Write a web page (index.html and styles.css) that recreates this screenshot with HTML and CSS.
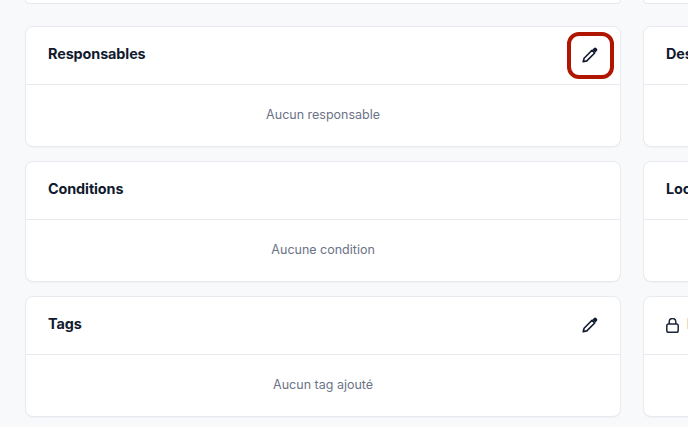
FILE: index.html
```html
<!DOCTYPE html>
<html lang="fr">
<head>
<meta charset="utf-8">
<title>Responsables</title>
<link rel="stylesheet" href="styles.css">
</head>
<body>
<main class="page">
  <div class="stub-row"><div class="stub"></div><div class="stub"></div></div>
  <div class="grid">
    <section class="card">
      <header class="card-head"><h2>Responsables</h2>
        <span class="edit">
          <svg class="pencil" viewBox="0 0 16 16"><path class="pen-line" d="M1.2 14.8l.9-3.6L10 3.3l2.7 2.7-7.9 7.9z"/><path class="pen-fill" d="M10.4 2.7l1.6-1.6a1.6 1.6 0 0 1 2.2 0l.7.7a1.6 1.6 0 0 1 0 2.2l-1.6 1.6z"/></svg>
          <span class="highlight"></span>
        </span>
      </header>
      <p class="card-body">Aucun responsable</p>
    </section>
    <section class="card">
      <header class="card-head"><h2>Description</h2></header>
      <p class="card-body"></p>
    </section>
    <section class="card">
      <header class="card-head"><h2>Conditions</h2></header>
      <p class="card-body">Aucune condition</p>
    </section>
    <section class="card">
      <header class="card-head"><h2>Localisation</h2></header>
      <p class="card-body"></p>
    </section>
    <section class="card">
      <header class="card-head"><h2>Tags</h2>
        <span class="edit">
          <svg class="pencil" viewBox="0 0 16 16"><path class="pen-line" d="M1.2 14.8l.9-3.6L10 3.3l2.7 2.7-7.9 7.9z"/><path class="pen-fill" d="M10.4 2.7l1.6-1.6a1.6 1.6 0 0 1 2.2 0l.7.7a1.6 1.6 0 0 1 0 2.2l-1.6 1.6z"/></svg>
        </span>
      </header>
      <p class="card-body">Aucun tag ajouté</p>
    </section>
    <section class="card">
      <header class="card-head locked">
        <svg class="lock" viewBox="0 0 13 15"><rect x="0.8" y="6" width="11.4" height="8.2" rx="1.8"/><path d="M3.2 6V3.8a3.3 3.3 0 0 1 6.6 0V6"/></svg>
        <h2>Privé</h2>
      </header>
      <p class="card-body"></p>
    </section>
  </div>
</main>
</body>
</html>
```
FILE: styles.css
```css
* { box-sizing: border-box; }
html, body { margin: 0; height: 100%; overflow: hidden; }
body {
  background: #f8f9fb;
  font-family: Inter, "Liberation Sans", sans-serif;
  color: #111a2e;
}
.page { width: 1240px; padding-left: 25.4px; }
.stub-row, .grid {
  display: grid;
  grid-template-columns: 595.4px 595.4px;
  column-gap: 22.6px;
}
.stub-row { margin-bottom: 22px; }
.stub, .card {
  background: #fff;
  border: 1px solid #e8eaef;
  border-radius: 8px;
}
.stub { height: 4px; border-top: 0; border-top-left-radius: 0; border-top-right-radius: 0; }
.grid { row-gap: 14px; }
.card { height: 121px; display: flex; flex-direction: column; box-shadow: 0 1px 1px rgba(20, 30, 60, 0.03); }
.card-head {
  height: 58px;
  flex: none;
  display: flex;
  align-items: center;
  justify-content: space-between;
  padding: 0 21.6px;
  border-bottom: 1px solid #e8eaef;
}
.card-head.locked { justify-content: flex-start; gap: 8px; }
.card-head h2 { margin: 0 0 4px; font-size: 14.4px; font-weight: 700; line-height: 20px; letter-spacing: -0.1px; }
.card-body {
  margin: 0;
  flex: 1;
  display: flex;
  align-items: center;
  justify-content: center;
  padding-bottom: 2px;
  font-size: 12.5px;
  color: #6b7386;
}
.edit { position: relative; display: flex; width: 16px; height: 16px; margin-top: -2px; }
.pencil { width: 16px; height: 16px; overflow: visible; }
.pen-line { fill: none; stroke: #111a2e; stroke-width: 1.6; stroke-linejoin: round; }
.pen-fill { fill: #111a2e; }
.lock { width: 13px; height: 15px; flex: none; fill: none; stroke: #1c2438; stroke-width: 1.5; }
.highlight {
  position: absolute;
  left: -15.5px;
  top: -15px;
  width: 47px;
  height: 47px;
  border: 4.5px solid #b01500;
  border-radius: 12px;
}
```
